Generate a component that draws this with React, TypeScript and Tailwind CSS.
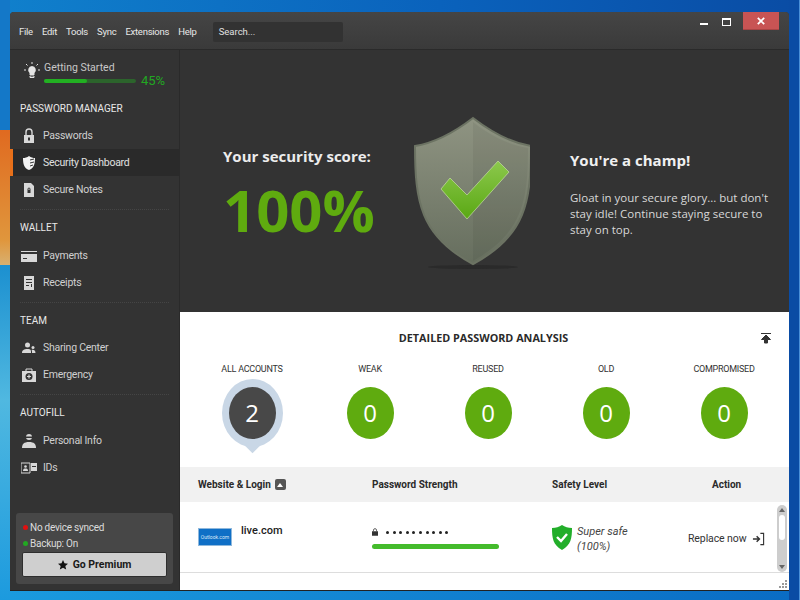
import React from "react";

function Icon({ children }: { children: React.ReactNode }) {
  return (
    <svg viewBox="0 0 16 16" className="w-4 h-4 fill-[#d8d8d8]">
      {children}
    </svg>
  );
}

const LockIcon = () => (
  <Icon>
    <path d="M3 7h10v8H3z" />
    <path d="M5 7V4a3 3 0 0 1 6 0v3" fill="none" stroke="#d8d8d8" strokeWidth="1.4" />
    <rect x="7" y="9.500" width="2" height="3" fill="#333" />
  </Icon>
);
const ShieldIcon = () => (
  <Icon>
    <path d="M8 1c2 1.500 4 2 6 2 0 6-1 10-6 12C3 13 2 9 2 3c2 0 4-.5 6-2z" fill="#f2f2f2" />
    <path d="M9 5l4-1M9 8l4-1M9 11l3-1" stroke="#333" strokeWidth="1" />
  </Icon>
);
const NoteIcon = () => (
  <Icon>
    <path d="M3 1h7l3 3v11H3z" />
    <rect x="6.500" y="8" width="3" height="3" fill="#333" />
    <path d="M7 8V7a1 1 0 0 1 2 0v1" fill="none" stroke="#333" />
  </Icon>
);
const CardIcon = () => (
  <Icon>
    <path d="M0 3h16v1H0zM0 6h16v8H0z" />
    <path d="M2 10h4v1H2z" fill="#333" />
  </Icon>
);
const ReceiptIcon = () => (
  <Icon>
    <path d="M3 1h10v14H3z" />
    <path d="M5 4h6v1H5zM5 7h6v1H5zM5 10h3v1H5zM10 9h1v3h-1z" fill="#333" />
  </Icon>
);
const TeamIcon = () => (
  <Icon>
    <circle cx="6.500" cy="5" r="2.500" />
    <path d="M1 13c0-3 2-4 5.500-4S10 10 10 13z" />
    <circle cx="12" cy="7.500" r="1.500" />
    <path d="M11 13c0-2 0-2.500-.5-3 2-.5 4 0 4 3z" />
  </Icon>
);
const AidIcon = () => (
  <Icon>
    <path d="M1 4h14v11H1z" />
    <path d="M5 4V2h6v2" fill="none" stroke="#d8d8d8" />
    <circle cx="8" cy="9.500" r="3.500" fill="#333" />
    <path d="M7.400 7.500h1.200v1.400H10v1.200H8.600v1.400H7.400v-1.400H6V8.900h1.400z" />
  </Icon>
);
const PersonIcon = () => (
  <Icon>
    <circle cx="8" cy="4" r="3" />
    <path d="M5 3.500h6v1.500H5z" fill="#333" />
    <path d="M1 15c0-4 2-6 7-6s7 2 7 6z" />
  </Icon>
);
const IdIcon = () => (
  <Icon>
    <path d="M0 3h9v10H0z" fill="none" stroke="#d8d8d8" />
    <circle cx="4.500" cy="6.500" r="1.300" />
    <path d="M2 11c0-2 1-2.500 2.500-2.500S7 9 7 11z" />
    <path d="M10 3h6v8h-6z" />
    <path d="M11 6h4v1h-4z" fill="#333" />
  </Icon>
);

type Item = { label: string; icon: React.ReactNode; active?: boolean };

function Section({
  title,
  items,
  divider = true,
  tight = false,
}: {
  title: string;
  items: Item[];
  divider?: boolean;
  tight?: boolean;
}) {
  return (
    <div>
      <div
        className={
          tight
            ? "pl-[10px] h-[16px] leading-[16px] text-[10px] text-[#e8e8e8] mb-[5px]"
            : "pl-[10px] h-[16px] leading-[16px] text-[10px] text-[#e8e8e8] mb-[6px]"
        }
      >
        {title}
      </div>
      {items.map((it) => (
        <div
          key={it.label}
          className={
            it.active
              ? "h-[27px] flex items-center border-l-[3px] border-[#e8701a] bg-[#2a2a2a] pl-[8px] text-[#e0e0e0] text-[10.500px] tracking-[-0.25px]"
              : "h-[27px] flex items-center pl-[11px] text-[#d0d0d0] text-[10.500px] tracking-[-0.25px]"
          }
        >
          <span className="w-[22px] flex">{it.icon}</span>
          {it.label}
        </div>
      ))}
      {divider && <div className="mx-[10px] mt-[6px] mb-[10px] border-t border-dotted border-[#454545]" />}
    </div>
  );
}

function Stat({ label, value, active }: { label: string; value: string; active?: boolean }) {
  return (
    <div className="flex flex-col items-center">
      <div className="h-[14px] leading-[14px] text-[9px] tracking-[-0.25px] text-[#333] [font-family:Roboto,sans-serif]">
        {label}
      </div>
      <div className="relative mt-[3px] w-[61px] h-[68px] flex items-center justify-center">
        {active && (
          <>
            <div className="absolute inset-0 rounded-[50%] bg-[#c9d7e6]" />
            <div className="absolute left-[25px] bottom-[-4px] w-[11px] h-[11px] rotate-45 bg-[#c9d7e6]" />
          </>
        )}
        <div
          className={
            active
              ? "relative w-[47px] h-[52px] rounded-[50%] bg-[#484848] text-white text-[24px] flex items-center justify-center"
              : "relative w-[47px] h-[52px] rounded-[50%] bg-[#5fab0f] text-white text-[24px] flex items-center justify-center"
          }
        >
          {value}
        </div>
      </div>
    </div>
  );
}

export default function App() {
  return (
    <div className="w-[800px] h-[600px] overflow-hidden flex [font-family:'Open_Sans',sans-serif] bg-[linear-gradient(to_right,#1080cc,#0a62bc_55%,#0a4ca4)]">
      {/* desktop strip on the left */}
      <div className="w-[10px] shrink-0 bg-[linear-gradient(to_bottom,#1478c8_0,#1478c8_130px,#e06a20_130px,#e0963c_240px,#d8b070_265px,#1c90d0_265px,#50b8e0_400px,#1c9ade_600px)]" />
      <div className="w-[779px] shrink-0 flex flex-col">
        <div className="h-[12px]" />
        <div className="h-[578px] flex flex-col rounded-t-[4px] overflow-hidden bg-[#333]">
          {/* title bar */}
          <div className="relative h-[38px] shrink-0 flex items-center pl-[9px] pt-[3px] bg-[linear-gradient(to_bottom,#454545,#3a3a3a)] border-b border-[#2a2a2a] [font-family:Roboto,sans-serif]">
            <div className="flex gap-[9px] text-[9.500px] tracking-[-0.25px] text-[#e8e8e8]">
              <span>File</span>
              <span>Edit</span>
              <span>Tools</span>
              <span>Sync</span>
              <span>Extensions</span>
              <span>Help</span>
            </div>
            <div className="ml-[16px] w-[130px] h-[20px] rounded-[2px] bg-[#323232] pl-[6px] text-[9.500px] leading-[20px] text-[#e0e0e0]">
              Search...
            </div>
            <div className="absolute right-[10px] top-0 flex items-start">
              <div className="w-[8px] h-[2px] mt-[11px] mr-[14px] bg-white" />
              <div className="w-[9px] h-[8px] mt-[6px] mr-[12px] border border-white border-t-[2px]" />
              <div className="w-[36px] h-[18px] bg-[#c85454] border-b border-[#a84444] flex items-center justify-center">
                <svg viewBox="0 0 10 10" className="w-[8px] h-[8px]">
                  <path d="M1 1l8 8M9 1l-8 8" stroke="#fff" strokeWidth="2.200" />
                </svg>
              </div>
            </div>
          </div>

          <div className="flex-1 flex min-h-0">
            {/* sidebar */}
            <aside className="w-[170px] shrink-0 flex flex-col bg-[#333] border-r border-[#2a2a2a] [font-family:Roboto,sans-serif]">
              <div className="h-[40px] flex items-start pl-[13px] pt-[11px]">
                <svg viewBox="0 0 18 18" className="w-[18px] h-[18px]">
                  <path d="M9 5a4 4 0 0 1 2.500 7v2h-5v-2A4 4 0 0 1 9 5z" fill="#e4e4e4" />
                  <path d="M7 15h4v1.500H7zM9 1v2M3 3l1.500 1.500M15 3l-1.500 1.500M1 9h2M15 9h2" stroke="#e4e4e4" />
                </svg>
                <div className="ml-[3px]">
                  <div className="text-[10.500px] leading-[13px] text-[#c8c8c8]">Getting Started</div>
                  <div className="flex items-center">
                    <div className="w-[92px] h-[4px] rounded-full bg-[#2c642c]">
                      <div className="w-[43px] h-[4px] rounded-full bg-[#22b022]" />
                    </div>
                    <span className="ml-[5px] text-[13px] leading-[14px] text-[#22a822]">45%</span>
                  </div>
                </div>
              </div>
              <div className="pt-[11px]">
                <Section
                  title="PASSWORD MANAGER"
                  tight
                  items={[
                    { label: "Passwords", icon: <LockIcon /> },
                    { label: "Security Dashboard", icon: <ShieldIcon />, active: true },
                    { label: "Secure Notes", icon: <NoteIcon /> },
                  ]}
                />
                <Section
                  title="WALLET"
                  items={[
                    { label: "Payments", icon: <CardIcon /> },
                    { label: "Receipts", icon: <ReceiptIcon /> },
                  ]}
                />
                <Section
                  title="TEAM"
                  tight
                  items={[
                    { label: "Sharing Center", icon: <TeamIcon /> },
                    { label: "Emergency", icon: <AidIcon /> },
                  ]}
                />
                <Section
                  title="AUTOFILL"
                  divider={false}
                  items={[
                    { label: "Personal Info", icon: <PersonIcon /> },
                    { label: "IDs", icon: <IdIcon /> },
                  ]}
                />
              </div>
              <div className="mt-auto mx-[6px] mb-[6px] h-[71px] rounded-[3px] bg-[#474747] px-[6px] pt-[6px]">
                <div className="flex items-center h-[16px] text-[10px] tracking-[-0.25px] text-[#dcdcdc]">
                  <span className="w-[5px] h-[5px] rounded-full bg-[#e01010] ml-[1px] mr-[2px]" />
                  No device synced
                </div>
                <div className="flex items-center h-[16px] text-[10px] tracking-[-0.25px] text-[#dcdcdc]">
                  <span className="w-[5px] h-[5px] rounded-full bg-[#22a822] ml-[1px] mr-[2px]" />
                  Backup: On
                </div>
                <div className="mt-[1px] h-[25px] rounded-[2px] bg-[#cfcfcf] border border-[#2e2e2e] flex items-center justify-center text-[10.500px] font-bold text-[#1a1a1a]">
                  <svg viewBox="0 0 12 12" className="w-[10px] h-[10px] mr-[5px]">
                    <path d="M6 0l1.800 4 4.200.4-3.200 2.800 1 4.300L6 9.200 2.200 11.500l1-4.300L0 4.400 4.200 4z" fill="#111" />
                  </svg>
                  Go Premium
                </div>
              </div>
            </aside>

            {/* main */}
            <main className="flex-1 min-w-0 flex flex-col">
              <section className="h-[262px] shrink-0 flex bg-[#333]">
                <div className="w-[220px] pl-[43px] pt-[95px]">
                  <div className="text-[15px] leading-[22px] font-bold text-[#ececec] whitespace-nowrap">
                    Your security score:
                  </div>
                  <div className="mt-[14px] text-[58px] leading-[58px] font-bold text-[#5fab0f]">100%</div>
                </div>
                <div className="w-[170px] pt-[60px]">
                  <svg viewBox="0 0 130 170" className="w-[130px] h-[170px]">
                    <defs>
                      <linearGradient id="shieldFill" x1="0" y1="0" x2="0" y2="1">
                        <stop offset="0" stopColor="#8f9482" />
                        <stop offset="1" stopColor="#666e5e" />
                      </linearGradient>
                      <linearGradient id="tick" x1="0" y1="0" x2="0" y2="1">
                        <stop offset="0" stopColor="#8cc84c" />
                        <stop offset="1" stopColor="#5aa814" />
                      </linearGradient>
                    </defs>
                    <ellipse cx="73" cy="157" rx="45" ry="2" fill="#2a2a2a" />
                    <path
                      d="M73 8C60 18 40 32 15 36c0 55 5 90 58 118 53-28 58-63 58-118C106 32 86 18 73 8z"
                      fill="url(#shieldFill)"
                      stroke="#6c7363"
                      strokeWidth="2"
                    />
                    <path d="M73 12c13 10 31 22 55 26 0 52-5 85-55 113z" fill="#000" opacity="0.05" />
                    <path d="M50 68l17 17 31-34 11 11-42 47-26-30z" fill="url(#tick)" stroke="#c4dca4" strokeWidth="0.700" />
                  </svg>
                </div>
                <div className="w-[208px] pt-[100px]">
                  <div className="text-[15px] leading-[20px] font-bold text-[#f0f0f0]">You're a champ!</div>
                  <p className="mt-[20px] text-[11.500px] leading-[16px] text-[#d8d8d8]">
                    Gloat in your secure glory... but don't stay idle! Continue staying secure to stay on top.
                  </p>
                </div>
              </section>

              <section className="flex-1 min-h-0 flex flex-col bg-white">
                <div className="relative h-[50px] shrink-0 flex items-center justify-center pt-[3px] pr-[2px] text-[10.800px] font-bold text-[#2a2a2a]">
                  DETAILED PASSWORD ANALYSIS
                  <svg viewBox="0 0 12 12" className="absolute right-[17px] top-[20px] w-[12px] h-[12px]">
                    <path d="M1 1.500h10M6 3l-4.500 4.500H4.500V11h3V7.500h3z" stroke="#333" fill="#333" strokeWidth="1" />
                  </svg>
                </div>
                <div className="grid grid-cols-[repeat(5,118px)] pl-[13px] h-[105px] shrink-0">
                  <Stat label="ALL ACCOUNTS" value="2" active />
                  <Stat label="WEAK" value="0" />
                  <Stat label="REUSED" value="0" />
                  <Stat label="OLD" value="0" />
                  <Stat label="COMPROMISED" value="0" />
                </div>
                <div className="h-[35px] shrink-0 grid grid-cols-[174px_180px_136px_1fr] items-center pl-[18px] bg-[#f1f1f1] text-[10px] font-bold text-[#2a2a2a] [font-family:Roboto,sans-serif]">
                  <div className="flex items-center">
                    Website & Login
                    <span className="ml-[4px] w-[11px] h-[11px] rounded-[2px] bg-[#555] flex items-center justify-center">
                      <span className="w-0 h-0 border-x-[3px] border-x-transparent border-b-[4px] border-b-white" />
                    </span>
                  </div>
                  <div>Password Strength</div>
                  <div>Safety Level</div>
                  <div className="pl-[24px]">Action</div>
                </div>
                <div className="h-[71px] shrink-0 flex border-b border-[#ddd] [font-family:Roboto,sans-serif]">
                  <div className="flex-1 grid grid-cols-[174px_180px_136px_1fr] items-center pl-[18px]">
                    <div className="flex items-center">
                      <div className="w-[34px] h-[18px] bg-[#0f6fc6] border border-[#8fb8dc] text-[5px] leading-[16px] text-center text-[#d8e8f8] whitespace-nowrap overflow-hidden">
                        Outlook.com
                      </div>
                      <div className="ml-[9px] -mt-[11px] text-[11px] font-medium text-[#222]">live.com</div>
                    </div>
                    <div>
                      <div className="flex items-center h-[14px]">
                        <svg viewBox="0 0 8 10" className="w-[6px] h-[8px]">
                          <path d="M0 4h8v6H0z" fill="#333" />
                          <path d="M2 4V2.500a2 2 0 0 1 4 0V4" fill="none" stroke="#333" />
                        </svg>
                        <div className="ml-[8px] flex gap-[3.600px]">
                          {Array.from({ length: 10 }).map((_, i) => (
                            <span key={i} className="w-[3px] h-[3px] rounded-full bg-[#222]" />
                          ))}
                        </div>
                      </div>
                      <div className="mt-[5px] w-[127px] h-[5px] rounded-full bg-[#44bb2c]" />
                    </div>
                    <div className="flex items-center">
                      <svg viewBox="0 0 20 25" className="w-[20px] h-[25px]">
                        <path d="M10 0c3 2 6 3 10 3 0 10-1 17-10 22C1 20 0 13 0 3c4 0 7-1 10-3z" fill="#22ae2a" />
                        <path d="M5 12l4 4 6-7" fill="none" stroke="#fff" strokeWidth="2.400" />
                      </svg>
                      <div className="ml-[5px] mt-[4px] text-[11px] leading-[15px] italic text-[#444]">
                        Super safe
                        <br />
                        (100%)
                      </div>
                    </div>
                    <div className="flex items-center mt-[4px] whitespace-nowrap text-[10.500px] tracking-[-0.1px] text-[#333]">
                      Replace now
                      <svg viewBox="0 0 14 14" className="ml-[6px] w-[13px] h-[14px]">
                        <path d="M1 7h6M5 4l3 3-3 3" fill="none" stroke="#333" strokeWidth="1.600" />
                        <path d="M9 1h3.500v12H9" fill="none" stroke="#333" strokeWidth="1.200" />
                      </svg>
                    </div>
                  </div>
                  <div className="w-[10px] mt-[3px] mr-[2px] rounded-full bg-[#cdcdcd] flex flex-col items-center pt-[3px]">
                    <span className="w-0 h-0 border-x-[3px] border-x-transparent border-b-[4px] border-b-[#666]" />
                    <span className="mt-[3px] w-[6px] h-[25px] rounded-full bg-white" />
                    <span className="mt-auto mb-[3px] w-0 h-0 border-x-[3px] border-x-transparent border-t-[4px] border-t-[#666]" />
                  </div>
                </div>
                <div className="relative flex-1">
                  <svg viewBox="0 0 9 9" className="absolute right-[1px] bottom-[1px] w-[9px] h-[9px] fill-[#9a9a9a]">
                    <path d="M6 0h2v2H6zM3 3h2v2H3zM6 3h2v2H6zM0 6h2v2H0zM3 6h2v2H3zM6 6h2v2H6z" />
                  </svg>
                </div>
              </section>
            </main>
          </div>
        </div>
        <div className="h-[10px] border-t border-[#222] bg-[linear-gradient(to_right,#1a9ade,#0a6cc4)]" />
      </div>
      <div className="flex-1 bg-[#0a4ca4] border-r border-[#4a90d8]" />
    </div>
  );
}
